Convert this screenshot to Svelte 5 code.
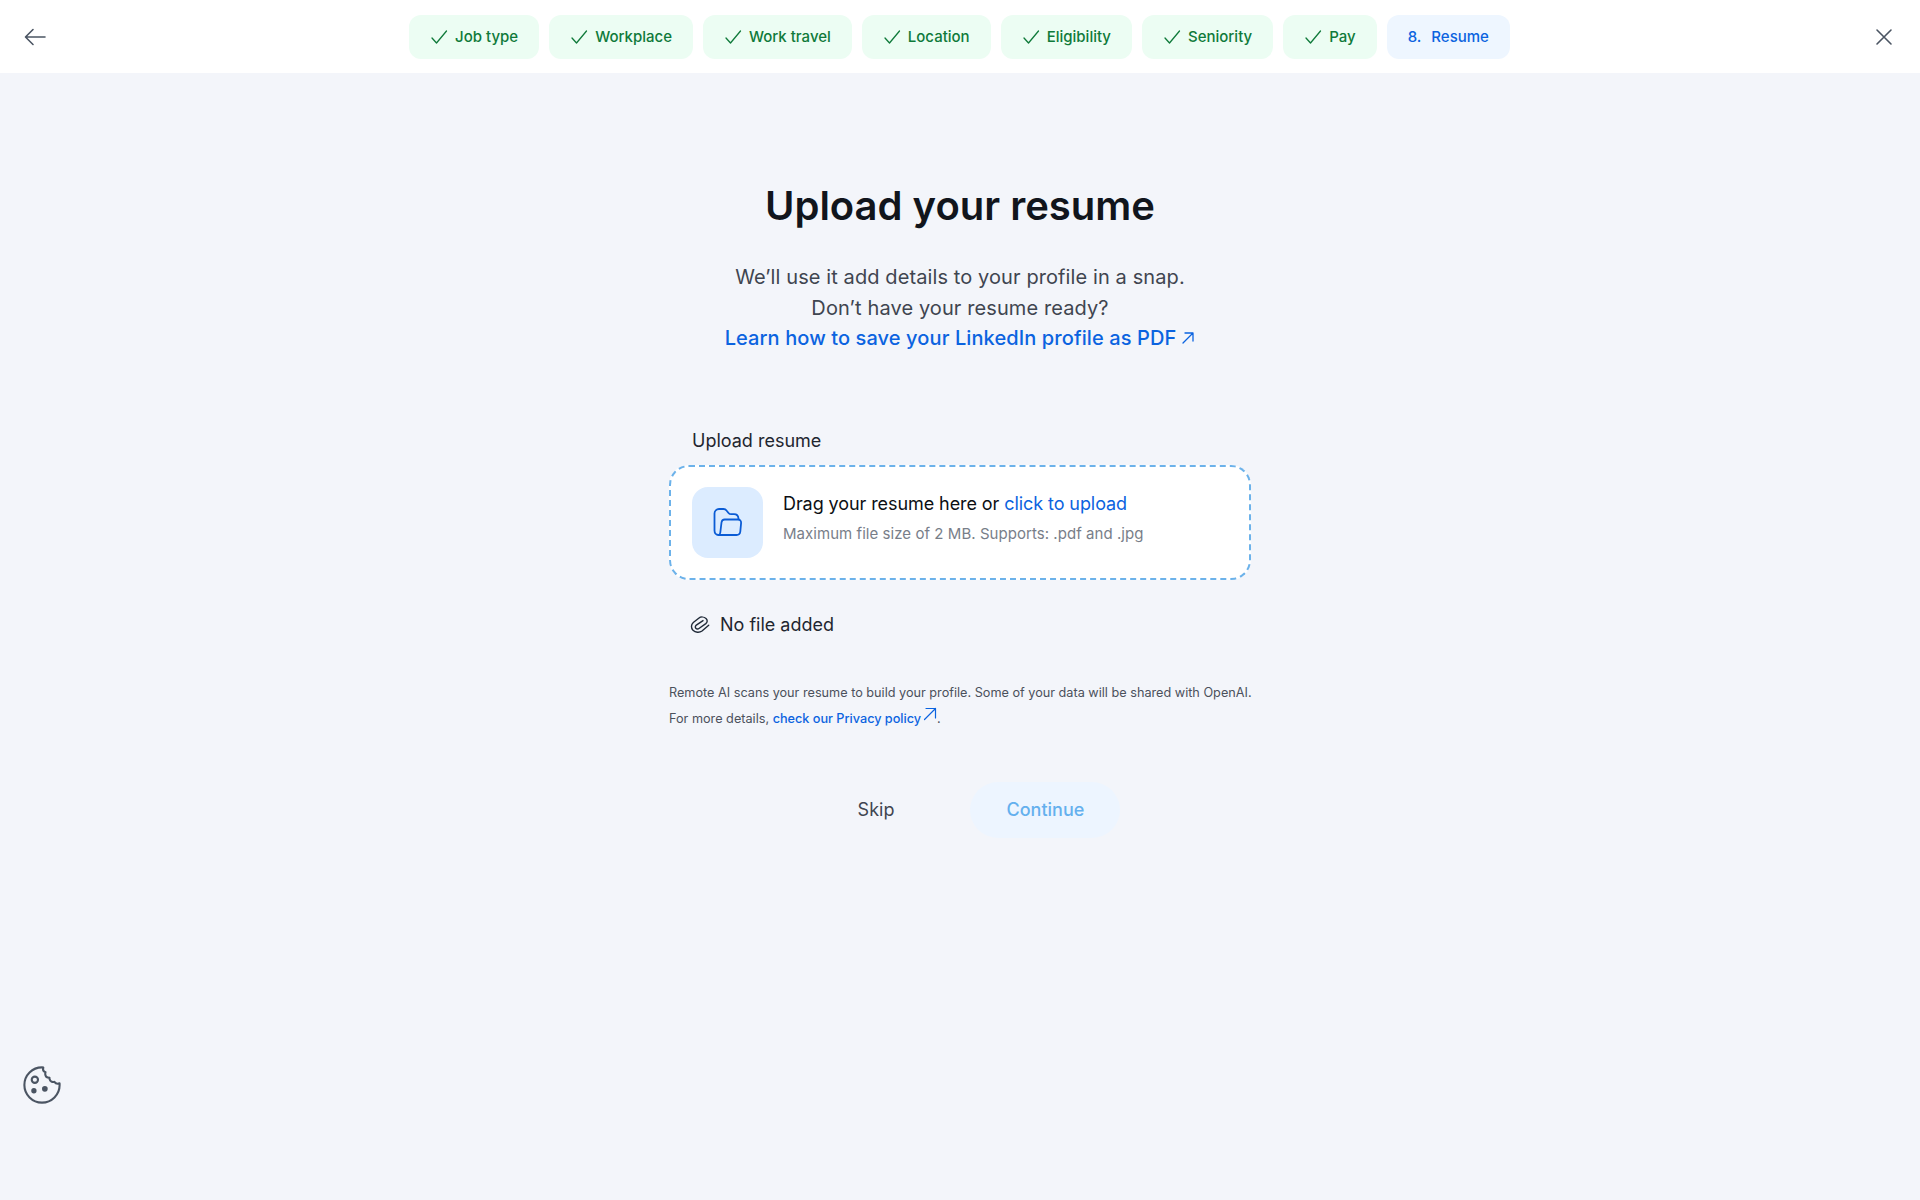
<script>
  const steps = ['Job type', 'Workplace', 'Work travel', 'Location', 'Eligibility', 'Seniority', 'Pay'];
</script>

<div class="page">
  <header class="topbar">
    <button class="icon-btn" aria-label="Back">
      <svg width="24" height="24" viewBox="0 0 24 24" fill="none" stroke="#4b5563" stroke-width="1.6" stroke-linecap="round" stroke-linejoin="round">
        <path d="M22 12H3M10 4.5 2.5 12l7.5 7.5" />
      </svg>
    </button>
    <nav class="steps">
      {#each steps as step}
        <span class="step done">
          <svg width="18" height="18" viewBox="0 0 18 18" fill="none" stroke="#0f7a3a" stroke-width="1.3" stroke-linecap="round" stroke-linejoin="round">
            <path d="M2 10 6.500 15 16.500 3" />
          </svg>
          {step}
        </span>
      {/each}
      <span class="step current"><span class="num">8.</span>Resume</span>
    </nav>
    <button class="icon-btn" aria-label="Close">
      <svg width="24" height="24" viewBox="0 0 24 24" fill="none" stroke="#4b5563" stroke-width="1.6" stroke-linecap="round">
        <path d="M5 5l14 14M19 5 5 19" />
      </svg>
    </button>
  </header>

  <main class="content">
    <h1>Upload your resume</h1>
    <p class="intro">
      We’ll use it add details to your profile in a snap.<br />
      Don’t have your resume ready?<br />
      <a href="#pdf">Learn how to save your LinkedIn profile as PDF<svg class="ext" width="14" height="14" viewBox="0 0 14 14" fill="none" stroke="currentColor" stroke-width="1.3" stroke-linecap="round" stroke-linejoin="round"><path d="M2 12 12 2M4 2h8v8" /></svg></a>
    </p>

    <div class="upload">
      <div class="label">Upload resume</div>
      <div class="dropzone">
        <div class="folder">
          <svg width="30" height="30" viewBox="0 0 30 30" fill="none" stroke="#0b5cd5" stroke-width="1.8" stroke-linecap="round" stroke-linejoin="round">
            <path d="M5.500 28C3 28 1.500 26 1.500 23.500V6.500C1.500 4 3.500 2 6 2h4.500c1.200 0 2.300.5 3 1.500l2 2.500c.7.900 1.700 1.200 2.800 1.200H21c2.500 0 4.300 1.800 4.500 4.500" />
            <path d="M5.500 28c1.200-.3 1.700-1.300 1.800-2.500l1.200-10c.2-1.700 1.500-3 3.200-3H25c2 0 3.300 1.500 3.100 3.500l-.8 8.500c-.2 2-1.800 3.500-3.800 3.500z" />
          </svg>
        </div>
        <div class="drop-text">
          <div class="drag">Drag your resume here or <a href="#upload">click to upload</a></div>
          <div class="hint">Maximum file size of 2 MB. Supports: .pdf and .jpg</div>
        </div>
      </div>
      <div class="no-file">
        <svg width="20" height="20" viewBox="0 0 20 20" fill="none" stroke="#1f2937" stroke-width="1.4" stroke-linecap="round" stroke-linejoin="round">
          <path d="M18.700 10.300 12 16C9.500 18 5.300 17.600 3 15.300 .8 13 1 9.600 3.300 7.500L8.700 3.200C10.800 1.600 14 1.700 16 3.500 17.800 5.200 17.400 7.300 15.800 8.600L9.300 13.300C8 14.300 6.700 14.200 5.800 13.200 5 12.300 5.200 11 6.300 10.100L13 5.600" />
        </svg>
        No file added
      </div>
    </div>

    <p class="legal">
      Remote AI scans your resume to build your profile. Some of your data will be shared with OpenAI.<br />
      For more details, <a href="#privacy">check our Privacy policy<svg class="ext-sm" width="14" height="14" viewBox="0 0 14 14" fill="none" stroke="currentColor" stroke-width="1.2" stroke-linecap="round" stroke-linejoin="round"><path d="M1.500 12.500 12.500 1.500M3 1.500h9.500V11" /></svg></a>.
    </p>

    <div class="actions">
      <button class="skip">Skip</button>
      <button class="continue" disabled>Continue</button>
    </div>
  </main>

  <button class="cookie" aria-label="Cookie settings">
    <svg width="40" height="40" viewBox="0 0 42 42" fill="none" stroke="#4b5563" stroke-width="2.2" stroke-linecap="round" stroke-linejoin="round">
      <path d="M21 2.500C10.800 2.500 2.500 10.800 2.500 21S10.800 39.500 21 39.500 39.500 31.200 39.500 21c0-.6 0-1.200-.1-1.800-1.900.8-4.200.2-5.400-1.500-2.200.6-4.400-.6-5-2.700-.2-.6-.2-1.100-.1-1.700-2.400.1-4.300-1.500-4.500-3.800 0-.7 0-1.300.3-1.900-2-.8-3-2.900-2.300-4.900 0-.1-1.100-.2-1.400-.2z" />
      <circle cx="13.500" cy="15.500" r="3.300" />
      <circle cx="12.500" cy="27" r="1.700" fill="#4b5563" />
      <circle cx="24" cy="25" r="1.900" fill="#4b5563" />
    </svg>
  </button>
</div>

<style>
  :global(body) {
    margin: 0;
    background: #f3f5fa;
    font-family: Inter, "Liberation Sans", sans-serif;
  }

  .page {
    position: relative;
    min-height: 1200px;
    background: #f3f5fa;
  }

  button {
    font-family: inherit;
    border: 0;
    background: none;
    padding: 0;
  }

  a {
    color: #0b63e0;
    text-decoration: none;
  }

  .topbar {
    height: 73px;
    background: #fff;
    display: flex;
    align-items: center;
    justify-content: space-between;
    padding: 0 24px 0 23px;
    box-sizing: border-box;
  }

  .icon-btn {
    width: 24px;
    height: 24px;
    display: flex;
  }

  .steps {
    display: flex;
    gap: 10px;
  }

  .step {
    height: 44px;
    box-sizing: border-box;
    padding: 0 21px;
    border-radius: 12px;
    display: flex;
    align-items: center;
    gap: 7px;
    font-size: 15px;
    font-weight: 500;
  }

  .done {
    background: #ecfdf3;
    color: #0f7a3a;
  }

  .current {
    background: #eef6ff;
    color: #0b63e0;
  }

  .num {
    margin-right: 3px;
  }

  .content {
    display: flex;
    flex-direction: column;
    align-items: center;
  }

  h1 {
    margin: 106px 0 0;
    font-size: 40px;
    line-height: 54px;
    font-weight: 600;
    color: #11151c;
  }

  .intro {
    margin: 29px 0 0;
    font-size: 20px;
    line-height: 30.500px;
    letter-spacing: 0.1px;
    text-align: center;
    color: #3f4550;
  }

  .intro a {
    font-weight: 500;
  }

  .ext {
    margin-left: 5px;
  }

  .upload {
    width: 582px;
    margin-top: 75px;
  }

  .label {
    padding-left: 23px;
    font-size: 18px;
    line-height: 24px;
    color: #1f2630;
    margin-bottom: 12px;
  }

  .dropzone {
    height: 115px;
    box-sizing: border-box;
    background: #fff;
    border: 2px dashed #6cb2ea;
    border-radius: 20px;
    padding: 0 21px;
    display: flex;
    align-items: center;
    gap: 20px;
  }

  .folder {
    width: 71px;
    height: 71px;
    border-radius: 16px;
    background: #dcecff;
    display: flex;
    align-items: center;
    justify-content: center;
  }

  .drop-text {
    margin-top: -6px;
  }

  .drag {
    font-size: 18px;
    font-weight: 400;
    line-height: 24px;
    letter-spacing: -0.08px;
    color: #0c0f14;
  }

  .hint {
    margin-top: 6px;
    font-size: 15px;
    line-height: 24px;
    letter-spacing: 0.05px;
    color: #787e89;
  }

  .no-file {
    margin-top: 33px;
    padding-left: 21px;
    display: flex;
    align-items: center;
    gap: 10px;
    font-size: 18px;
    line-height: 24px;
    color: #1f2630;
  }

  .legal {
    width: 582px;
    margin: 43px 0 0;
    font-size: 12.680px;
    line-height: 26px;
    white-space: nowrap;
    color: #4b515c;
  }

  .legal a {
    font-weight: 500;
  }

  .ext-sm {
    vertical-align: 2px;
    margin-left: 2px;
  }

  .actions {
    margin-top: 50px;
    display: flex;
    align-items: center;
    gap: 52px;
    margin-left: 34px;
  }

  .skip {
    font-size: 18px;
    padding: 0 24px;
    color: #3f4550;
  }

  .continue {
    width: 150px;
    height: 56px;
    border-radius: 28px;
    background: #edf5ff;
    color: #64b0ee;
    font-size: 18px;
    font-weight: 500;
  }

  .cookie {
    position: absolute;
    left: 22px;
    top: 1065px;
    display: flex;
  }
</style>
